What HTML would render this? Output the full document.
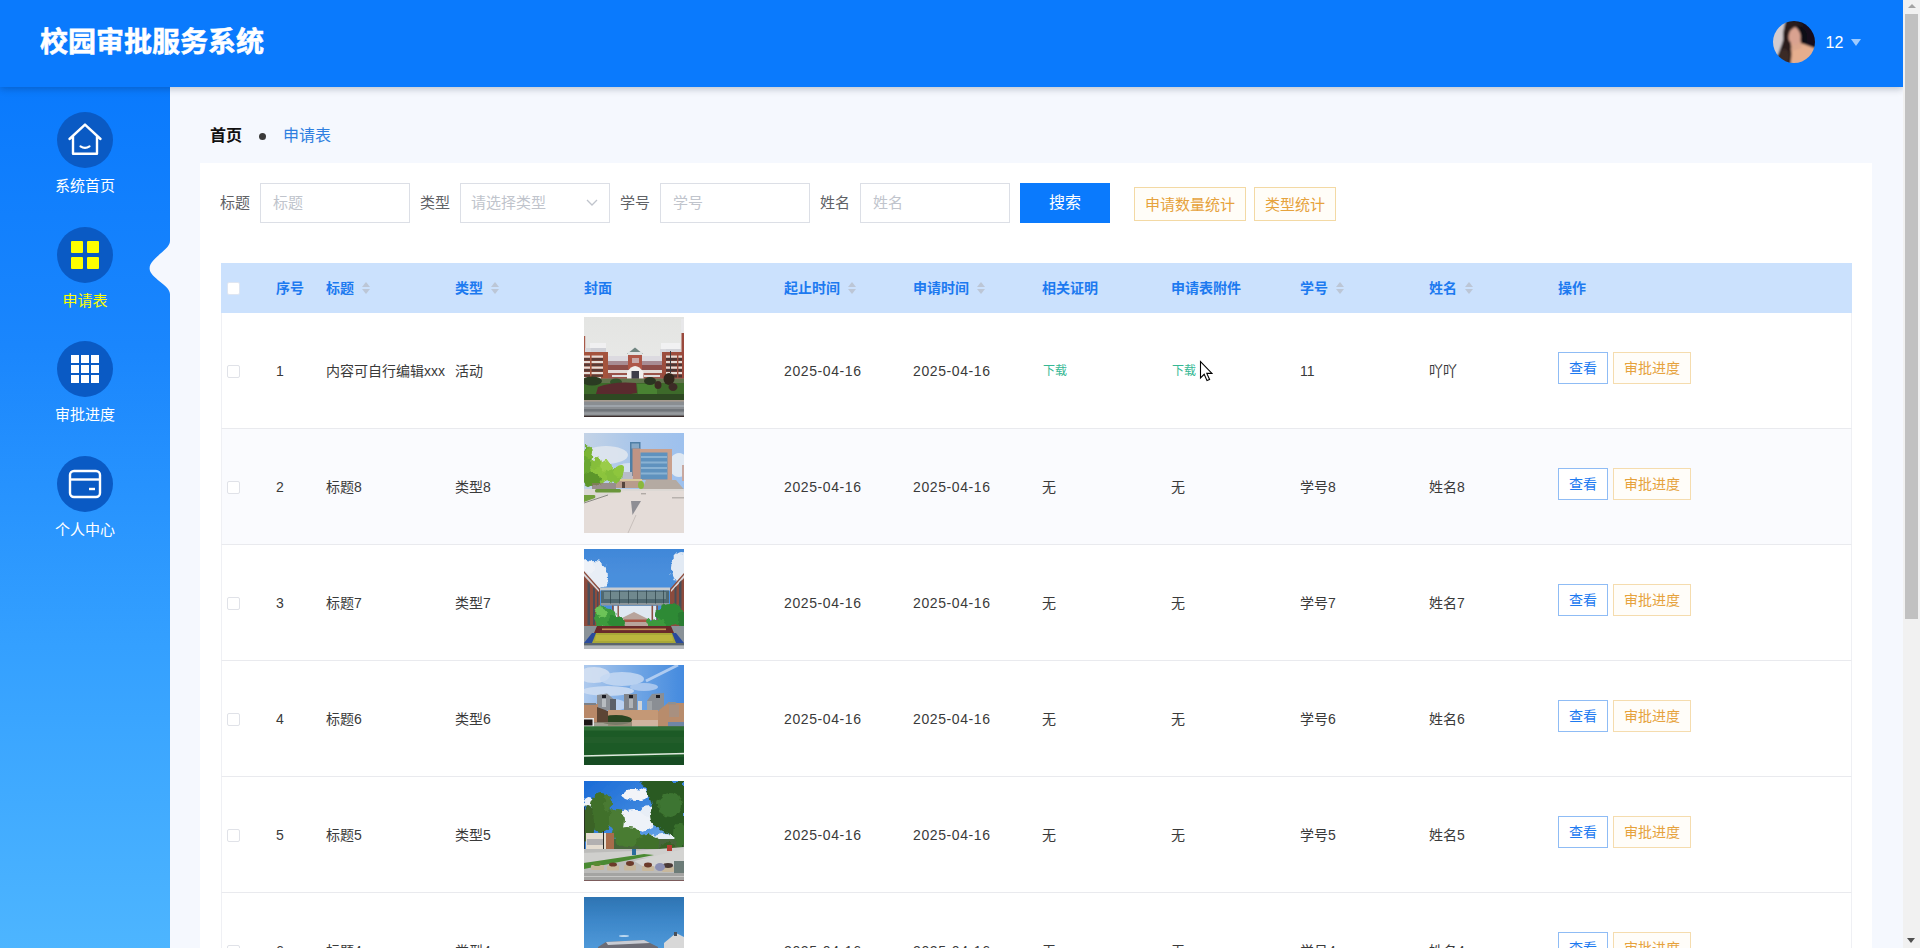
<!DOCTYPE html>
<html lang="zh-CN">
<head>
<meta charset="utf-8">
<title>校园审批服务系统</title>
<style>
*{box-sizing:border-box;margin:0;padding:0}
html,body{width:1920px;height:948px;overflow:hidden;background:#f5f8fe;font-family:"Liberation Sans","Noto Sans CJK SC",sans-serif;color:#333}
body{position:relative}
.abs{position:absolute}
/* header */
#hdr{position:absolute;left:0;top:0;width:1903px;height:87px;background:#0a7afd;box-shadow:0 2px 7px rgba(0,21,41,.24);z-index:5}
#hdr .title{-webkit-text-stroke:.55px #fff;position:absolute;left:40px;top:21px;font-size:28px;line-height:44px;font-weight:bold;color:#fff;letter-spacing:0;white-space:nowrap}
#hdr .avatar{position:absolute;left:1773px;top:21px;width:42px;height:42px;border-radius:50%;overflow:hidden}
#hdr .uname{position:absolute;left:1825.5px;top:31.7px;font-size:16px;line-height:22px;color:#fff}
#hdr .caret{position:absolute;left:1851px;top:39px;width:0;height:0;border-left:5px solid transparent;border-right:5px solid transparent;border-top:7px solid #9ecbff}
/* sidebar */
#side{position:absolute;left:0;top:87px;width:170px;height:861px;background:linear-gradient(180deg,#0a7afd 0%,#1a86fd 30%,#34a0ff 65%,#4db5ff 100%);z-index:2}
.mi{position:absolute;left:0;width:170px;text-align:center}
.mi .c{position:absolute;left:57px;top:0;width:56px;height:56px;border-radius:50%;background:#0a5ac4}
.mi .t{position:absolute;left:0;top:63px;width:170px;text-align:center;font-size:15px;line-height:22px;color:#fff;white-space:nowrap}
.mi.on .t{color:#ffff00}
.mi svg{position:absolute;left:0;top:0}
/* scrollbar */
#sb{position:absolute;left:1903px;top:0;width:17px;height:948px;background:#f1f1f1;z-index:9}
#sb .th{position:absolute;left:2px;top:14px;width:13px;height:605px;background:#c1c1c1}
#sb .up{position:absolute;left:4.5px;top:4px;width:0;height:0;border-left:4px solid transparent;border-right:4px solid transparent;border-bottom:4.5px solid #a3a3a3}
#sb .dn{position:absolute;left:4px;top:938px;width:0;height:0;border-left:4.5px solid transparent;border-right:4.5px solid transparent;border-top:5px solid #505050}
/* content */
#bc{position:absolute;left:210px;top:124px;height:24px;line-height:24px;white-space:nowrap}
#bc b{font-size:16px;color:#111;font-weight:bold}
#bc i{display:inline-block;position:relative;top:-0.5px;width:7.5px;height:7.5px;border-radius:50%;background:#3a3a3a;margin:0 17px 0 16.5px;vertical-align:middle}
#bc span{font-size:16px;color:#2f7fe0}
#card{position:absolute;left:200px;top:163px;width:1672px;height:800px;background:#fff}
.lb{position:absolute;top:192px;font-size:15px;line-height:22px;color:#606266;white-space:nowrap}
.ip{position:absolute;top:183px;width:150px;height:40px;border:1px solid #dcdfe6;background:#fff;font-size:15px;line-height:38px;color:#c0c4cc;padding-left:12px;white-space:nowrap}
#btnS{position:absolute;left:1020px;top:183px;width:90px;height:40px;background:#0a7afd;color:#fff;font-size:16px;line-height:40px;text-align:center}
.yb{position:absolute;top:187px;height:34px;border:1px solid #f3d9a4;background:#fffdf8;color:#e6a23c;font-size:15px;line-height:33px;text-align:center;white-space:nowrap}
/* table */
#th{position:absolute;left:221px;top:263px;width:1631px;height:50px;background:#cbe1fd}
.h{position:absolute;top:277px;font-size:14px;line-height:22px;font-weight:bold;color:#1d7af0;white-space:nowrap}
.h s{display:inline-block;position:relative;width:10px;height:14px;margin-left:7px;vertical-align:-2px;text-decoration:none}
.h s:before{content:"";position:absolute;left:1px;top:1px;border-left:4px solid transparent;border-right:4px solid transparent;border-bottom:5px solid #bcc6d6}
.h s:after{content:"";position:absolute;left:1px;top:8px;border-left:4px solid transparent;border-right:4px solid transparent;border-top:5px solid #bcc6d6}
.row{position:absolute;left:221px;width:1631px;height:116px;border-bottom:1px solid #e9eaee;border-left:1px solid #eff0f4;border-right:1px solid #eff0f4;background:#fff}
.row.z{background:#fafbfe}
.row div,.row span{position:absolute;white-space:nowrap}
.row .t{top:47px;font-size:14px;line-height:22px;color:#3a3a3a}
.row .d{letter-spacing:.6px}
.row .ck{left:5px;top:51.5px;width:13px;height:13px;border:1px solid #e0e2e8;border-radius:2px;background:#fff}
.row .g{color:#36b894;font-size:12px;top:47px;line-height:22px}
.row .pic{left:362px;top:4px;width:100px;height:100px;overflow:hidden}
.row .b1{left:1336px;top:39px;width:50px;height:32px;border:1px solid #8fbcf5;background:#fff;color:#1d7af0;font-size:14px;line-height:30px;text-align:center}
.row .b2{left:1391px;top:39px;width:78px;height:32px;border:1px solid #f5dcae;background:#fffdf9;color:#e6a23c;font-size:14px;line-height:30px;text-align:center}
</style>
</head>
<body>
<div id="hdr">
  <div class="title">校园审批服务系统</div>
  <div class="avatar"><svg width="42" height="42" viewBox="0 0 42 42"><defs><filter id="ba" x="-10%" y="-10%" width="120%" height="120%"><feGaussianBlur stdDeviation="0.9"/></filter></defs><g filter="url(#ba)"><rect x="-3" y="-3" width="48" height="48" fill="#14101c"/><path d="M-3 -3 H13 L10 20 L5 34 L-3 40z" fill="#d4cccf"/><path d="M18 27 L28 22 L44 28 V45 H14z" fill="#e6ae8e"/><path d="M17 18 L27 17 L29 27 L19 30z" fill="#dca68c"/><ellipse cx="21" cy="14.500" rx="6.500" ry="9.300" transform="rotate(-16 21 14.500)" fill="#d9a290"/><path d="M12 2 Q22 -3 31 5 Q22 4 17 10 Q14 17 17 24 Q20 31 17 45 H4 Q3 37 7 30 Q11 22 10 12z" fill="#2a1e1e"/><path d="M7 30 Q12 26 15 30 Q18 36 14 44 L5 40z" fill="#3a2a28"/><path d="M27 5 Q36 10 34 22 L28.500 22.500 Q30 13 25 7z" fill="#100c16"/></g></svg></div>
  <div class="uname">12</div>
  <div class="caret"></div>
</div>

<div id="side">
  <div class="mi" style="top:25px"><div class="c"></div>
    <svg width="170" height="56" viewBox="0 0 170 56"><path d="M69.5 27 L85 12.600 L100.5 27 M73 24.500v17.300h24V24.500" fill="none" stroke="#fff" stroke-width="2.4" stroke-linejoin="round" stroke-linecap="round"/><path d="M80.500 34.300q4.500 3 9 0" fill="none" stroke="#fff" stroke-width="2.2" stroke-linecap="round"/></svg>
    <div class="t">系统首页</div></div>
  <div class="mi on" style="top:140px"><div class="c"></div>
    <svg width="170" height="56" viewBox="0 0 170 56"><g fill="#ffff00"><rect x="71" y="14" width="12" height="12" rx="1"/><rect x="87" y="14" width="12" height="12" rx="1"/><rect x="71" y="30" width="12" height="12" rx="1"/><rect x="87" y="30" width="12" height="12" rx="1"/></g></svg>
    <div class="t">申请表</div></div>
  <div class="mi" style="top:254px"><div class="c"></div>
    <svg width="170" height="56" viewBox="0 0 170 56"><g fill="#fff"><rect x="71" y="14" width="8" height="8"/><rect x="81" y="14" width="8" height="8"/><rect x="91" y="14" width="8" height="8"/><rect x="71" y="24" width="8" height="8"/><rect x="81" y="24" width="8" height="8"/><rect x="91" y="24" width="8" height="8"/><rect x="71" y="34" width="8" height="8"/><rect x="81" y="34" width="8" height="8"/><rect x="91" y="34" width="8" height="8"/></g></svg>
    <div class="t">审批进度</div></div>
  <div class="mi" style="top:369px"><div class="c"></div>
    <svg width="170" height="56" viewBox="0 0 170 56"><rect x="70" y="15" width="30" height="26" rx="4" fill="none" stroke="#fff" stroke-width="2.4"/><path d="M70 23.5h30" stroke="#fff" stroke-width="2.4"/><path d="M89 33h6" stroke="#fff" stroke-width="2.4"/></svg>
    <div class="t">个人中心</div></div>
  <svg class="abs" style="left:148px;top:154px" width="22" height="53" viewBox="0 0 22 53"><path d="M22 0 C22 9 1.600 17 1.600 27.500 C1.600 37 22 44 22 53z" fill="#f5f8fe"/></svg>
</div>

<div id="bc"><b>首页</b><i></i><span>申请表</span></div>
<div id="card"></div>

<div class="lb" style="left:220px">标题</div><div class="ip" style="left:260px">标题</div>
<div class="lb" style="left:420px">类型</div><div class="ip" style="left:460px;padding-left:10px">请选择类型<svg class="abs" style="left:124px;top:14px" width="14" height="10" viewBox="0 0 14 10"><path d="M2 2l5 5 5-5" fill="none" stroke="#c0c4cc" stroke-width="1.3"/></svg></div>
<div class="lb" style="left:620px">学号</div><div class="ip" style="left:660px">学号</div>
<div class="lb" style="left:820px">姓名</div><div class="ip" style="left:860px">姓名</div>
<div id="btnS">搜索</div>
<div class="yb" style="left:1134px;width:112px">申请数量统计</div>
<div class="yb" style="left:1254px;width:82px">类型统计</div>

<div id="th"><div class="abs" style="left:6px;top:19px;width:13px;height:13px;background:#fff;border:1px solid #dfe6f2;border-radius:2px"></div></div>
<div class="h" style="left:276px">序号</div>
<div class="h" style="left:326px">标题<s></s></div>
<div class="h" style="left:455px">类型<s></s></div>
<div class="h" style="left:584px">封面</div>
<div class="h" style="left:784px">起止时间<s></s></div>
<div class="h" style="left:913px">申请时间<s></s></div>
<div class="h" style="left:1042px">相关证明</div>
<div class="h" style="left:1171px">申请表附件</div>
<div class="h" style="left:1300px">学号<s></s></div>
<div class="h" style="left:1429px">姓名<s></s></div>
<div class="h" style="left:1558px">操作</div>

<!--ROWS-->
<div class="row" style="top:313px"><div class="ck"></div><span class="t" style="left:54px">1</span><span class="t" style="left:104px">内容可自行编辑xxx</span><span class="t" style="left:233px">活动</span><div class="pic"><svg width="100" height="100" viewBox="0 0 100 100"><defs><filter id="b1" x="-5%" y="-5%" width="110%" height="110%"><feGaussianBlur stdDeviation="0.7"/></filter><filter id="d1" x="-10%" y="-10%" width="120%" height="120%"><feTurbulence type="fractalNoise" baseFrequency="0.16" numOctaves="2" seed="1" result="t"/><feDisplacementMap in="SourceGraphic" in2="t" scale="7" xChannelSelector="R" yChannelSelector="G"/></filter><linearGradient id="s1" x1="0" y1="0" x2="0" y2="1"><stop offset="0" stop-color="#e3e4e2"/><stop offset="1" stop-color="#eeeeec"/></linearGradient></defs><g filter="url(#b1)"><rect x="-5" y="-5" width="110" height="110" fill="url(#s1)"/><rect x="97" y="2" width="4" height="14" fill="#e8e8ea"/><rect x="97.5" y="16" width="3" height="47" fill="#9a4a3c"/><rect x="0" y="19" width="1.2" height="16" fill="#a85a48"/><rect x="6" y="26" width="16" height="12" fill="#f0f0f1"/><rect x="6" y="31" width="16" height="5" fill="#cfd0d6"/><rect x="1" y="31" width="6" height="8" fill="#d6d6da"/><rect x="0" y="35" width="24" height="28" fill="#a4523e"/><g fill="#e6dcd6"><rect x="0" y="38.5" width="19" height="2.2"/><rect x="0" y="44" width="19" height="2.2"/><rect x="0" y="49.5" width="19" height="2.2"/><rect x="0" y="55" width="19" height="2.2"/><rect x="0" y="60" width="17" height="2"/></g><g fill="#5a3a34"><rect x="0" y="41" width="19" height="2.6"/><rect x="0" y="46.5" width="19" height="2.6"/><rect x="0" y="52" width="19" height="2.6"/><rect x="0" y="57.5" width="19" height="2.2"/></g><rect x="6" y="36" width="1.6" height="26" fill="#a4523e"/><rect x="77" y="26" width="19" height="12" fill="#f1f1f2"/><rect x="77" y="32" width="20" height="4" fill="#d2d3d8"/><rect x="76" y="32" width="6" height="8" fill="#d8d8dc"/><rect x="78" y="35" width="20" height="28" fill="#9c4e3e"/><g fill="#e4dad4"><rect x="82" y="38.5" width="16" height="2.2"/><rect x="82" y="44" width="16" height="2.2"/><rect x="82" y="49.5" width="16" height="2.2"/><rect x="82" y="55" width="16" height="2.2"/></g><g fill="#4e3430"><rect x="82" y="41" width="16" height="2.6"/><rect x="82" y="46.5" width="16" height="2.6"/><rect x="82" y="52" width="16" height="2.6"/><rect x="82" y="57.5" width="16" height="3"/></g><rect x="86" y="34" width="1" height="22" fill="#3a3a40"/><rect x="93" y="36" width="1.4" height="26" fill="#9c4e3e"/><rect x="24" y="39" width="54" height="5" fill="#dcdae0"/><rect x="24" y="44" width="54" height="8" fill="#a88c94"/><rect x="24" y="48" width="54" height="5" fill="#8c4e4a"/><rect x="24" y="53" width="54" height="3" fill="#e2dcd8"/><rect x="24" y="56" width="54" height="7" fill="#9a5248"/><rect x="28" y="58" width="18" height="2" fill="#ddd"/><rect x="60" y="58" width="16" height="2" fill="#ddd"/><path d="M43 37 L51 30.5 L59 37z" fill="#6f8580"/><rect x="44" y="35" width="14" height="3" fill="#dfe3e2"/><rect x="44" y="38" width="14" height="14" fill="#ae5646"/><rect x="48" y="41" width="7" height="5" fill="#c8a8a8"/><path d="M43 55 Q51 43 59.500 55 V63 H43z" fill="#f0eeec"/><rect x="47.500" y="54" width="7.500" height="9" fill="#3c3c48"/><rect x="-5" y="62" width="110" height="22" fill="#3e6a2a"/><rect x="-5" y="61" width="110" height="5" fill="#7a7a62" opacity=".6"/><ellipse cx="8" cy="64" rx="10" ry="4.500" fill="#2a3a20"/><ellipse cx="32" cy="65" rx="6" ry="3.500" fill="#33522a"/><path d="M14 70 Q30 64 52 66 L53 76 Q34 80 12 77z" fill="#5a2a2e"/><path d="M53 67h20v10H54z" fill="#4a8232"/><ellipse cx="66" cy="64" rx="6" ry="4" fill="#2c3422"/><ellipse cx="74" cy="68" rx="3.500" ry="4" fill="#3a2c24"/><ellipse cx="85" cy="62" rx="5.500" ry="6" fill="#30281e"/><ellipse cx="89" cy="70" rx="4.500" ry="4" fill="#3e2c26"/><rect x="-5" y="77" width="110" height="6" fill="#2e4a24"/><rect x="-5" y="83" width="110" height="16" fill="#8a8e92"/><rect x="-5" y="83" width="110" height="1.6" fill="#a89c90"/><rect x="-5" y="88" width="110" height="2" fill="#9ea4aa"/><rect x="-5" y="92" width="110" height="2.500" fill="#70747a"/><rect x="-5" y="95.500" width="110" height="2" fill="#969a9e"/><rect x="-5" y="98.600" width="110" height="5" fill="#3a2e2e"/></g></svg></div><span class="t d" style="left:562px">2025-04-16</span><span class="t d" style="left:691px">2025-04-16</span><span class="g" style="left:821px">下载</span><span class="g" style="left:950px">下载</span><span class="t" style="left:1078px">11</span><span class="t" style="left:1207px">吖吖</span><div class="b1">查看</div><div class="b2">审批进度</div></div>
<div class="row z" style="top:429px"><div class="ck"></div><span class="t" style="left:54px">2</span><span class="t" style="left:104px">标题8</span><span class="t" style="left:233px">类型8</span><div class="pic"><svg width="100" height="100" viewBox="0 0 100 100"><defs><filter id="b2" x="-5%" y="-5%" width="110%" height="110%"><feGaussianBlur stdDeviation="0.7"/></filter><filter id="d2" x="-10%" y="-10%" width="120%" height="120%"><feTurbulence type="fractalNoise" baseFrequency="0.16" numOctaves="2" seed="2" result="t"/><feDisplacementMap in="SourceGraphic" in2="t" scale="7" xChannelSelector="R" yChannelSelector="G"/></filter><linearGradient id="s2" x1="0" y1="0" x2="1" y2="0"><stop offset="0" stop-color="#c6d4e6"/><stop offset=".5" stop-color="#a9c6ea"/><stop offset="1" stop-color="#9cc0ee"/></linearGradient></defs><g filter="url(#b2)"><rect x="-5" y="-5" width="110" height="65" fill="url(#s2)"/><ellipse cx="22" cy="22" rx="22" ry="9" fill="#dfe6ee" opacity=".9"/><ellipse cx="95" cy="32" rx="10" ry="12" fill="#e6ecf2" opacity=".9"/><ellipse cx="45" cy="38" rx="14" ry="8" fill="#dde6f0" opacity=".8"/><rect x="46" y="9" width="10.500" height="34" fill="#4f7fa6"/><rect x="47.500" y="10.500" width="7.500" height="5" fill="#86a8c6"/><rect x="48.500" y="15.500" width="8" height="31.500" fill="#c09484"/><rect x="56" y="16" width="32" height="31" fill="#caa08c"/><rect x="56.500" y="19.500" width="27" height="27" fill="#5f92be"/><g fill="#9cc0dc" opacity=".7"><rect x="57" y="23" width="26" height="2"/><rect x="57" y="28.500" width="26" height="2"/><rect x="57" y="34" width="26" height="2"/><rect x="57" y="39.500" width="26" height="2"/></g><rect x="98" y="32" width="3" height="16" fill="#c8a8a0"/><rect x="38" y="39" width="10" height="8" fill="#b8bcc8"/><rect x="32" y="47" width="26" height="8" fill="#b89c8c"/><rect x="36" y="46" width="22" height="2" fill="#d8c89c"/><rect x="38" y="49" width="3" height="6" fill="#54443c"/><path d="M62 47h30l8 9.500H58z" fill="#b4aaa2"/><rect x="-5" y="56" width="110" height="50" fill="#e4dcd8"/><path d="M-5 70 L40 58 L105 58 L105 56 L-5 56z" fill="#dcd8d4"/><path d="M47 68h10l-8.500 14z" fill="#8e8e94"/><path d="M52 82 L44 100" stroke="#c8c0bc" stroke-width="1"/><rect x="88" y="64" width="12" height="1.500" fill="#b8b2ae"/><rect x="57" y="60" width="5" height="1.400" fill="#b0aaa6"/><g filter="url(#d2)"><ellipse cx="3" cy="30" rx="5" ry="17" fill="#6aa832"/><ellipse cx="15" cy="40" rx="9" ry="11" fill="#8cc43c"/><ellipse cx="30" cy="42" rx="9" ry="8" fill="#84be3a"/><ellipse cx="8" cy="46" rx="9" ry="7" fill="#5c962c"/><ellipse cx="22" cy="33" rx="6" ry="6" fill="#9acc48"/><ellipse cx="5" cy="20" rx="4" ry="6" fill="#7ab436"/><ellipse cx="35" cy="38" rx="6" ry="6" fill="#8ec63e"/><ellipse cx="12" cy="30" rx="5" ry="6" fill="#86be3a"/></g><rect x="8" y="50" width="24" height="6" fill="#8c7468" opacity=".7"/><rect x="11" y="56" width="26" height="3.500" rx="1.500" fill="#6a963a"/><path d="M0 62h10q2 0 1 3L0 69z" fill="#72a03c"/><path d="M0 70 L24 62" stroke="#8a8a84" stroke-width="1"/><ellipse cx="57" cy="52" rx="3" ry="4" fill="#8ab83c"/></g></svg></div><span class="t d" style="left:562px">2025-04-16</span><span class="t d" style="left:691px">2025-04-16</span><span class="t" style="left:820px">无</span><span class="t" style="left:949px">无</span><span class="t" style="left:1078px">学号8</span><span class="t" style="left:1207px">姓名8</span><div class="b1">查看</div><div class="b2">审批进度</div></div>
<div class="row" style="top:545px"><div class="ck"></div><span class="t" style="left:54px">3</span><span class="t" style="left:104px">标题7</span><span class="t" style="left:233px">类型7</span><div class="pic"><svg width="100" height="100" viewBox="0 0 100 100"><defs><filter id="b3" x="-5%" y="-5%" width="110%" height="110%"><feGaussianBlur stdDeviation="0.7"/></filter><filter id="d3" x="-10%" y="-10%" width="120%" height="120%"><feTurbulence type="fractalNoise" baseFrequency="0.16" numOctaves="2" seed="3" result="t"/><feDisplacementMap in="SourceGraphic" in2="t" scale="7" xChannelSelector="R" yChannelSelector="G"/></filter><linearGradient id="s3" x1="0" y1="0" x2="0" y2="1"><stop offset="0" stop-color="#3f86d8"/><stop offset=".4" stop-color="#4a8fdc"/></linearGradient></defs><g filter="url(#b3)"><rect x="-5" y="-5" width="110" height="80" fill="url(#s3)"/><g filter="url(#d3)"><ellipse cx="10" cy="27" rx="14" ry="15" fill="#e8eef6"/><ellipse cx="3" cy="18" rx="8" ry="7" fill="#eef2f8"/><ellipse cx="97" cy="19" rx="10" ry="15" fill="#e2eaf4"/></g><rect x="30" y="57" width="42" height="14" fill="#dfe8f2"/><path d="M36 70 L50 63 L64 70 V78 H36z" fill="#b8a49c"/><rect x="40" y="70.500" width="24" height="2.500" fill="#a85444"/><path d="M0 22 L16 40 V78 H0z" fill="#8c4c3c"/><path d="M0 24 L15 41 V43 L0 27z" fill="#d8d8dc"/><g fill="#4a4e58"><path d="M3.500 32 L6 35 V76 H3.500z"/><path d="M9 38 L11 40 V76 H9z"/><path d="M13 42l1.400 1.400V74H13z"/></g><path d="M100 24 L86 40 V78 H100z" fill="#8c4c3c"/><path d="M100 26 L87 41 V43 L100 29z" fill="#d8d8dc"/><g fill="#4a4e58"><path d="M95 34l2.500-3v44H95z"/><path d="M90.500 39l2-2v38h-2z"/></g><rect x="16" y="38.500" width="70" height="3" fill="#c8ccd0"/><rect x="17" y="41.500" width="68" height="13" fill="#506870"/><rect x="20" y="43" width="62" height="7" fill="#8aa4a8" opacity=".55"/><rect x="17" y="54" width="68" height="2.500" fill="#8e979c"/><g fill="#344a50"><rect x="26" y="41.500" width=".8" height="13"/><rect x="35" y="41.500" width=".8" height="13"/><rect x="44" y="41.500" width=".8" height="13"/><rect x="53" y="41.500" width=".8" height="13"/><rect x="62" y="41.500" width=".8" height="13"/><rect x="71" y="41.500" width=".8" height="13"/><rect x="79" y="41.500" width=".8" height="13"/></g><rect x="28" y="56.500" width="1.600" height="20" fill="#8a5040"/><rect x="33.500" y="56.500" width="1.400" height="16" fill="#8a5040"/><rect x="67.500" y="56.500" width="1.600" height="18" fill="#8a5040"/><rect x="72.500" y="56.500" width="1.400" height="16" fill="#8a5040"/><g filter="url(#d3)"><ellipse cx="21" cy="68" rx="11" ry="11" fill="#3c9a3c"/><ellipse cx="33" cy="74" rx="9" ry="7" fill="#2f8a36"/><ellipse cx="17" cy="63" rx="6" ry="5" fill="#6cc458"/><ellipse cx="86" cy="66" rx="14" ry="12" fill="#2f8a36"/><ellipse cx="72" cy="75" rx="9" ry="6" fill="#3c9a3c"/><ellipse cx="99" cy="72" rx="5" ry="9" fill="#2a7c30"/></g><rect x="-5" y="77" width="110" height="28" fill="#8a9298"/><path d="M13 77h74l3 7H10z" fill="#6a2a2a"/><rect x="18" y="79.500" width="64" height="1.600" fill="#d8a860" opacity=".8"/><path d="M10 84h80l2 10H8z" fill="#a8a838"/><path d="M12 86h76l1 6H11z" fill="#c8c040" opacity=".6"/><path d="M0 94 L8 84h4l-4 10z" fill="#2a4c9c"/><path d="M100 94 L92 84h-4l4 10z" fill="#2a4c9c"/><rect x="-5" y="94" width="110" height="2.500" fill="#5c666c"/><rect x="-5" y="96.500" width="110" height="5" fill="#b4b8bc"/></g></svg></div><span class="t d" style="left:562px">2025-04-16</span><span class="t d" style="left:691px">2025-04-16</span><span class="t" style="left:820px">无</span><span class="t" style="left:949px">无</span><span class="t" style="left:1078px">学号7</span><span class="t" style="left:1207px">姓名7</span><div class="b1">查看</div><div class="b2">审批进度</div></div>
<div class="row" style="top:661px"><div class="ck"></div><span class="t" style="left:54px">4</span><span class="t" style="left:104px">标题6</span><span class="t" style="left:233px">类型6</span><div class="pic"><svg width="100" height="100" viewBox="0 0 100 100"><defs><filter id="b4" x="-5%" y="-5%" width="110%" height="110%"><feGaussianBlur stdDeviation="0.7"/></filter><filter id="d4" x="-10%" y="-10%" width="120%" height="120%"><feTurbulence type="fractalNoise" baseFrequency="0.16" numOctaves="2" seed="4" result="t"/><feDisplacementMap in="SourceGraphic" in2="t" scale="7" xChannelSelector="R" yChannelSelector="G"/></filter><linearGradient id="s4" x1="0" y1="0" x2="1" y2="0"><stop offset="0" stop-color="#b4cdee"/><stop offset=".55" stop-color="#6ea4e4"/><stop offset="1" stop-color="#3f87de"/></linearGradient></defs><g filter="url(#b4)"><rect x="-5" y="-5" width="110" height="60" fill="url(#s4)"/><ellipse cx="10" cy="10" rx="16" ry="8" fill="#d4e0f2" opacity=".9"/><ellipse cx="38" cy="14" rx="22" ry="7" fill="#c4d8f2" opacity=".85"/><ellipse cx="24" cy="26" rx="26" ry="5" fill="#d0def2" opacity=".85"/><ellipse cx="60" cy="22" rx="14" ry="4" fill="#b8d0f0" opacity=".8"/><path d="M62 16 Q78 8 94 0" stroke="#c4d8f4" stroke-width="3" fill="none" opacity=".8"/><ellipse cx="30" cy="40" rx="12" ry="6" fill="#c8daf2" opacity=".8"/><path d="M13 30 L23 28.500 L32 36 V45 H13z" fill="#8c9096"/><rect x="26" y="34" width="6" height="11" fill="#5c6068"/><rect x="18" y="30" width="4" height="3" fill="#1c1c20"/><rect x="18" y="34" width="4" height="8" fill="#b8bcc0"/><rect x="40" y="29" width="13" height="16" fill="#80848a"/><rect x="45" y="30" width="4" height="3" fill="#1c1c20"/><rect x="45" y="34" width="4" height="9" fill="#b0b4b8"/><path d="M63 36 L68 29 L80 28 V45 H63z" fill="#8a8e94"/><rect x="72" y="30" width="4" height="3" fill="#1c1c20"/><rect x="63" y="36" width="5" height="9" fill="#a0a4a8"/><rect x="54" y="36" width="4" height="9" fill="#d0d4d8"/><rect x="0" y="39" width="14" height="19" fill="#b88868"/><rect x="0" y="38" width="12" height="2" fill="#7c8088"/><rect x="24" y="45" width="50" height="16" fill="#c49876"/><rect x="48" y="55" width="26" height="6" fill="#d0b4a0"/><path d="M74 46 L84 38 H100 V62 H74z" fill="#b88c6c"/><rect x="85" y="40" width="10" height="12" fill="#a89080"/><rect x="84" y="37" width="8" height="2.500" fill="#8c9094"/><ellipse cx="32" cy="55" rx="16" ry="5" fill="#2c4424"/><path d="M13 42 L24 46 V58 H13z" fill="#5c4434"/><rect x="0" y="53" width="10" height="8" fill="#e8e8e8"/><rect x="0" y="54.500" width="8.500" height="6" fill="#1c1414"/><rect x="10" y="57" width="38" height="4.500" fill="#8c8878" opacity=".8"/><rect x="84" y="57" width="16" height="4.500" fill="#5c84b4" opacity=".8"/><rect x="-5" y="61.500" width="110" height="45" fill="#1f5a28"/><rect x="-5" y="61.500" width="110" height="4" fill="#2f6e34"/><rect x="-5" y="72" width="110" height="6" fill="#235f2a" opacity=".6"/><rect x="-5" y="92" width="110" height="12" fill="#184c22"/><path d="M-2 91 L102 88.500" stroke="#dfeadf" stroke-width="1.600"/></g></svg></div><span class="t d" style="left:562px">2025-04-16</span><span class="t d" style="left:691px">2025-04-16</span><span class="t" style="left:820px">无</span><span class="t" style="left:949px">无</span><span class="t" style="left:1078px">学号6</span><span class="t" style="left:1207px">姓名6</span><div class="b1">查看</div><div class="b2">审批进度</div></div>
<div class="row" style="top:777px"><div class="ck"></div><span class="t" style="left:54px">5</span><span class="t" style="left:104px">标题5</span><span class="t" style="left:233px">类型5</span><div class="pic"><svg width="100" height="100" viewBox="0 0 100 100"><defs><filter id="b5" x="-5%" y="-5%" width="110%" height="110%"><feGaussianBlur stdDeviation="0.7"/></filter><filter id="d5" x="-10%" y="-10%" width="120%" height="120%"><feTurbulence type="fractalNoise" baseFrequency="0.16" numOctaves="2" seed="5" result="t"/><feDisplacementMap in="SourceGraphic" in2="t" scale="7" xChannelSelector="R" yChannelSelector="G"/></filter><linearGradient id="s5" x1="0" y1="0" x2="1" y2="1"><stop offset="0" stop-color="#1668d6"/><stop offset=".5" stop-color="#3c86de"/><stop offset="1" stop-color="#8cc0ee"/></linearGradient></defs><g filter="url(#b5)"><rect x="-5" y="-5" width="110" height="80" fill="url(#s5)"/><g filter="url(#d5)"><ellipse cx="51" cy="14" rx="13" ry="6" fill="#f2f4f8"/><ellipse cx="5" cy="21" rx="6" ry="5" fill="#eef2f8"/><ellipse cx="51" cy="40" rx="20" ry="11" fill="#eef2f8"/><ellipse cx="65" cy="30" rx="9" ry="6" fill="#e8eef6"/><ellipse cx="79" cy="58" rx="14" ry="6" fill="#e6eef6"/></g><rect x="26" y="58" width="80" height="12" fill="#46663a"/><g filter="url(#d5)"><path d="M57 0 H100 V66 Q92 56 80 50 Q66 46 66 32 Q70 22 64 14z" fill="#2c5a24"/><ellipse cx="86" cy="24" rx="12" ry="12" fill="#3c7430"/><ellipse cx="96" cy="54" rx="6" ry="12" fill="#3a722e"/><ellipse cx="17" cy="32" rx="11" ry="20" fill="#41702c"/><ellipse cx="4" cy="42" rx="6" ry="18" fill="#3a6428"/><ellipse cx="33" cy="40" rx="8" ry="13" fill="#4c7c34"/><ellipse cx="24" cy="22" rx="4" ry="9" fill="#4a7a32"/><ellipse cx="44" cy="56" rx="14" ry="10" fill="#4a7c30"/><ellipse cx="64" cy="62" rx="12" ry="8" fill="#40702c"/><ellipse cx="84" cy="66" rx="8" ry="4" fill="#386428"/></g><rect x="2" y="52" width="20" height="16" fill="#e4dcd0"/><rect x="22" y="52" width="8" height="16" fill="#a86c4c"/><rect x="3" y="58" width="16" height="6" fill="#9c9ca4" opacity=".7"/><rect x="0" y="26" width=".8" height="50" fill="#2a2a24"/><rect x="19" y="50" width="1" height="30" fill="#2c2c28"/><rect x="-5" y="68" width="110" height="36" fill="#bcbcba"/><path d="M-5 72 L50 70 L100 66 V74 L-5 82z" fill="#cfcfcd"/><rect x="48" y="68" width="4" height="6" fill="#2c6c9c"/><rect x="83" y="64" width="5" height="6" fill="#b43c30"/><path d="M0 82 L60 73 L70 74 L0 88z" fill="#4a8a30"/><path d="M50 80 L100 68 V84 L60 86z" fill="#d4d4d2"/><g fill="#c8b89c"><rect x="7" y="84" width="13" height="5" rx="1"/><rect x="23" y="84.500" width="12" height="5" rx="1"/><rect x="40" y="84" width="12" height="5.500" rx="1"/><rect x="58" y="85" width="12" height="5" rx="1"/><rect x="78" y="86" width="12" height="5" rx="1"/></g><g fill="#6c3a2c"><ellipse cx="13" cy="83" rx="4" ry="2" fill="#5a8a30"/><ellipse cx="29" cy="83.500" rx="4" ry="2"/><ellipse cx="46" cy="82.500" rx="4" ry="2.400"/><ellipse cx="64" cy="84" rx="4" ry="2.400"/><ellipse cx="84" cy="84.500" rx="5" ry="2.400" fill="#4a3834"/></g><ellipse cx="76" cy="86" rx="5" ry="4" fill="#8c90b4"/><rect x="90" y="80" width="10" height="12" fill="#6c7c78"/><rect x="-5" y="92" width="110" height="10" fill="#a4a4a2"/><rect x="-5" y="95" width="110" height="1" fill="#c8c8c6"/><rect x="-5" y="99" width="110" height="2" fill="#7c5c5c"/></g></svg></div><span class="t d" style="left:562px">2025-04-16</span><span class="t d" style="left:691px">2025-04-16</span><span class="t" style="left:820px">无</span><span class="t" style="left:949px">无</span><span class="t" style="left:1078px">学号5</span><span class="t" style="left:1207px">姓名5</span><div class="b1">查看</div><div class="b2">审批进度</div></div>
<div class="row" style="top:893px"><div class="ck"></div><span class="t" style="left:54px">6</span><span class="t" style="left:104px">标题4</span><span class="t" style="left:233px">类型4</span><div class="pic"><svg width="100" height="100" viewBox="0 0 100 100"><defs><filter id="b6" x="-5%" y="-5%" width="110%" height="110%"><feGaussianBlur stdDeviation="0.7"/></filter><filter id="d6" x="-10%" y="-10%" width="120%" height="120%"><feTurbulence type="fractalNoise" baseFrequency="0.16" numOctaves="2" seed="6" result="t"/><feDisplacementMap in="SourceGraphic" in2="t" scale="7" xChannelSelector="R" yChannelSelector="G"/></filter><linearGradient id="s6" x1="0" y1="0" x2="0" y2="1"><stop offset="0" stop-color="#2a70ae"/><stop offset=".25" stop-color="#3c86c8"/><stop offset=".5" stop-color="#4e98d8"/></linearGradient></defs><g filter="url(#b6)"><rect x="-5" y="-5" width="110" height="110" fill="url(#s6)"/><ellipse cx="40" cy="39" rx="5" ry="1" fill="#bcd8f0"/><path d="M14 50 L22 45 L60 43 L74 50 V100 H14z" fill="#6c6c74"/><path d="M22 45 L60 43 L66 46 L24 48z" fill="#c8ccd4"/><path d="M80 46 L92 36 L100 40 V100 H80z" fill="#d8d8d8"/><rect x="90" y="35" width="3" height="4" fill="#4a5058"/><rect x="14" y="56" width="86" height="50" fill="#8c7c6c"/></g></svg></div><span class="t d" style="left:562px">2025-04-16</span><span class="t d" style="left:691px">2025-04-16</span><span class="t" style="left:820px">无</span><span class="t" style="left:949px">无</span><span class="t" style="left:1078px">学号4</span><span class="t" style="left:1207px">姓名4</span><div class="b1">查看</div><div class="b2">审批进度</div></div>
<!--/ROWS-->

<svg class="abs" style="left:1199px;top:360px;z-index:8" width="14" height="22" viewBox="-1 -1 14 22"><path d="M0.500 0.500 V17 L4.200 13.300 L7 19.600 L9.600 18.500 L6.800 12.400 H12z" fill="#fff" stroke="#000" stroke-width="1.100" stroke-linejoin="miter"/></svg>
<div id="sb"><div class="up"></div><div class="th"></div><div class="dn"></div></div>
</body>
</html>
